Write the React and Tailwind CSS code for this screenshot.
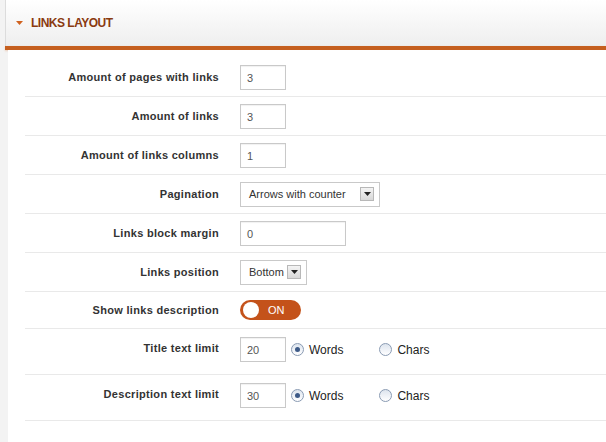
import React from "react";

const F = { fontFamily: '"Liberation Sans", Arial, sans-serif' };

function Row({ label, children, tall = false }) {
  if (tall) {
    return (
      <div className="flex h-[46px] items-start border-b border-[#e9e9e9] pt-[8px]">
        <div className="flex h-[23px] w-[194px] items-center justify-end text-[11px] font-bold tracking-[0.3px] text-[#333]">{label}</div>
        <div className="ml-[21px] flex items-center">{children}</div>
      </div>
    );
  }
  return (
    <div className="flex h-[39px] items-center border-b border-[#e9e9e9]">
      <div className="w-[194px] text-right text-[11px] font-bold tracking-[0.3px] text-[#333]">{label}</div>
      <div className="ml-[21px] flex items-center">{children}</div>
    </div>
  );
}

function Input({ value, w = "w-[46px]" }) {
  return (
    <div className={`${w} flex h-[25px] items-center border border-[#c9c9c9] bg-white pl-[6px] pt-[2px] text-[11px] text-[#555] shadow-[inset_0_1px_1px_rgba(0,0,0,0.06)]`}>
      {value}
    </div>
  );
}

function Select({ value, w }) {
  return (
    <div className={`${w} flex h-[25px] items-center justify-between border border-[#c9c9c9] bg-white pl-[8px] pr-[5px] text-[11px] text-[#333]`}>
      <span>{value}</span>
      <span className="flex h-[14px] w-[14px] items-center justify-center border border-[#b8b8b8] bg-gradient-to-b from-[#f4f4f4] to-[#d8d8d8]">
        <svg width="7" height="4" viewBox="0 0 7 4"><path d="M0 0h7L3.5 4z" fill="#222" /></svg>
      </span>
    </div>
  );
}

function Radio({ checked, label }) {
  return (
    <div className="flex items-center">
      <span className="flex h-[13px] w-[13px] items-center justify-center rounded-full border border-[#8a9bb3] bg-gradient-to-b from-[#dde4ee] to-[#ffffff]">
        {checked && <span className="h-[5px] w-[5px] rounded-full bg-[#3d5a87]" />}
      </span>
      <span className="ml-[5px] text-[12px] text-[#222]">{label}</span>
    </div>
  );
}

export default function App() {
  return (
    <div style={F} className="flex h-[442px] w-[606px] overflow-hidden bg-[#f3f3f3]">
      <div className="w-[5px] shrink-0" />
      <div className="flex flex-1 flex-col">
        <div className="flex h-[46px] items-center border-l border-[#dcdcdc] bg-gradient-to-b from-[#ffffff] to-[#eeeeee] pl-[10px]">
          <svg width="7" height="4" viewBox="0 0 7 4" className="mt-[-1px]"><path d="M0 0h7L3.5 4z" fill="#d0621f" /></svg>
          <span className="ml-[8px] text-[12px] font-bold tracking-[-0.5px] text-[#8a3a10]">LINKS LAYOUT</span>
        </div>
        <div className="h-[4px] bg-[#c55f1f] shadow-[0_1px_2px_rgba(220,120,60,0.3)]" />
        <div className="ml-[3px] flex-1 bg-white pl-[17px] pt-[8px]">
          <Row label="Amount of pages with links"><Input value="3" /></Row>
          <Row label="Amount of links"><Input value="3" /></Row>
          <Row label="Amount of links columns"><Input value="1" /></Row>
          <Row label="Pagination"><Select value="Arrows with counter" w="w-[140px]" /></Row>
          <Row label="Links block margin"><Input value="0" w="w-[106px]" /></Row>
          <Row label="Links position"><Select value="Bottom" w="w-[67px]" /></Row>
          <div className="flex h-[37px] items-center border-b border-[#e9e9e9]">
            <div className="w-[194px] text-right text-[11px] font-bold tracking-[0.3px] text-[#333]">Show links description</div>
            <div className="ml-[21px] flex h-[20px] w-[61px] items-center rounded-full bg-[#c4521a] pl-[3px]">
              <span className="h-[16px] w-[16px] rounded-full bg-white" />
              <span className="ml-[9px] text-[11px] text-white">ON</span>
            </div>
          </div>
          <Row label="Title text limit" tall>
            <Input value="20" />
            <div className="ml-[5px]"><Radio checked label="Words" /></div>
            <div className="ml-[36px]"><Radio label="Chars" /></div>
          </Row>
          <Row label="Description text limit" tall>
            <Input value="30" />
            <div className="ml-[5px]"><Radio checked label="Words" /></div>
            <div className="ml-[36px]"><Radio label="Chars" /></div>
          </Row>
        </div>
      </div>
    </div>
  );
}
